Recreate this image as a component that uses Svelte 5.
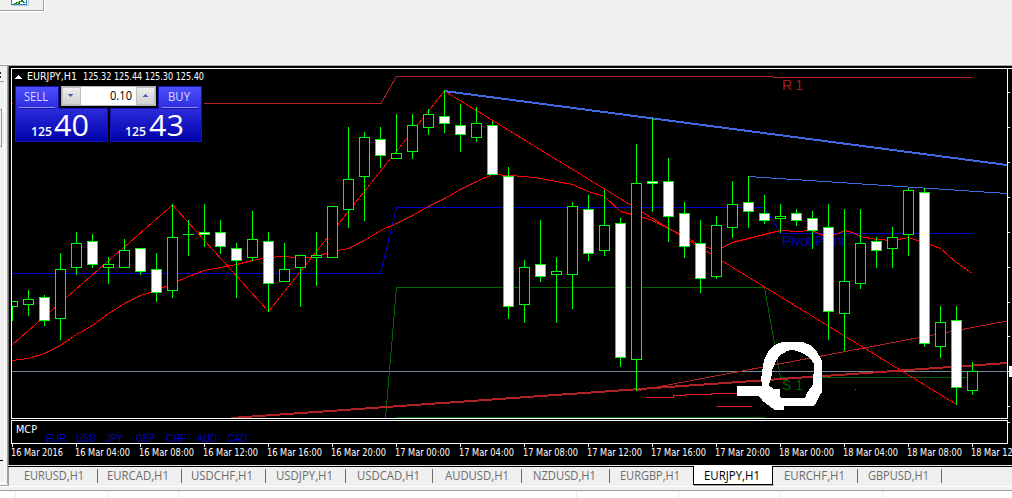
<script>
  // [high, bodyTop, bodyBottom, low, bearish]
  const bars = [
    [301,301,307,321,0],[290,299,305,316,0],[295,297,321,326,1],[253,269,319,340,0],[232,243,268,275,0],
    [234,241,265,268,1],[257,264,268,284,0],[239,250,268,268,0],[248,248,272,275,1],[253,269,293,302,1],
    [204,237,291,298,0],[220,234,235,256,0],[204,232,235,247,1],[220,232,247,254,1],[243,248,261,298,1],
    [211,239,258,261,0],[232,241,284,312,1],[243,269,282,282,0],[255,255,268,307,0],[232,255,258,286,0],
    [206,206,258,258,0],[127,179,210,228,0],[132,137,177,221,0],[127,139,156,168,1],[114,153,159,159,0],
    [114,125,152,159,0],[109,114,128,135,0],[90,116,124,133,1],[104,125,135,152,1],[107,123,138,142,0],
    [121,125,175,175,1],[167,176,307,319,1],[260,267,305,323,0],[220,264,277,282,1],[257,271,275,323,0],
    [202,206,275,309,0],[195,209,254,261,1],[190,225,251,256,0],[218,223,358,367,1],[144,183,360,391,0],
    [118,181,184,212,1],[158,181,217,242,1],[202,213,247,258,1],[220,243,279,293,1],[216,225,277,279,0],
    [181,204,228,238,0],[176,202,212,228,1],[195,213,221,224,1],[204,216,219,233,0],[209,213,221,226,1],
    [211,218,231,249,1],[204,227,312,340,1],[209,281,314,351,0],[209,243,284,289,0],[237,241,251,268,1],
    [227,237,249,268,0],[188,190,235,256,0],[188,192,344,347,1],[306,322,347,358,0],[306,320,388,405,1],
    [362,371,391,395,0]
  ];
  const candles = bars.map(([hi, top, bot, lo, full], i) => ({ x: 12 + 16 * i, hi, top, bot, lo, full }));

  const average = '12,360 28,358 44,353 60,345 76,334 92,325 108,313 124,303 140,295 156,290 172,283 188,276 204,270 220,267 236,264 252,260 268,257 284,256 300,258 316,256 332,251 348,248 364,240 380,230 396,223 412,215 428,206 444,198 460,189 476,181 492,174 508,175 524,176 540,178 556,181 572,184 588,191 604,196 620,211 636,215 652,220 668,228 684,236 700,245 710,248 722,247 732,242 748,238 764,234 780,230 796,231 812,230 820,234 828,236 838,233 844,230 852,232 860,236 876,239 892,240 908,237 920,241 932,245 940,248 956,262 972,273';

  const times = ['16 Mar 2016', ...[1,2,3,4,5,6,7,8,9,10,11,12,13,14,15].map((n) => {
    const h = n * 4;
    return `${16 + Math.floor(h / 24)} Mar ${String(h % 24).padStart(2, '0')}:00`;
  })];
  const currencies = [['EUR',46,20],['USD',76,20],['JPY',106,17],['GBP',136,19],['CHF',166,20],['AUD',197,20],['CAD',227,20]];
  const scale = [92,127,162,197,232,267,302,336,371,406,422];
  const tabs = [
    ['EURUSD,H1',24,60,97],['EURCAD,H1',107,62,181],['USDCHF,H1',191,62,265],['USDJPY,H1',276,57,345],
    ['USDCAD,H1',357,63,432],['AUDUSD,H1',445,64,521],['NZDUSD,H1',533,63,609],['EURGBP,H1',620,60,0],
    ['EURJPY,H1',704,56,0],['EURCHF,H1',784,61,857],['GBPUSD,H1',868,61,941]
  ];
  const columns = [15,107,178,576,678,780,882];
</script>

<div class="window">
  <header class="toolbar">
    <svg width="1012" height="66" shape-rendering="crispEdges">
      <path d="M43.5 0V10.5H0" fill="none" stroke="#a0a0a0" />
      <path d="M44.5 0V11.5H0" fill="none" stroke="#fff" />
      <rect x="11" y="0" width="16" height="5" fill="#2f7fc4" />
      <rect x="12" y="0" width="14" height="4" fill="#fff" />
      <path d="M14 3.5h2v-1h2v1h1v-2h2v-1h1v1h1v1h2" fill="none" stroke="#138a13" />
      <path d="M12 5.5h16V0" fill="none" stroke="#c0ccd8" />
    </svg>
  </header>

  <main class="workspace">
    <aside class="side">
      <svg width="9" height="420" shape-rendering="crispEdges">
        <path d="M0 6.5h1M0 10.5h1" stroke="#222" stroke-width="2" />
        <path d="M0 15.5h4.5V420" fill="none" stroke="#fff" />
        <path d="M0 15.5h4" stroke="#a0a0a0" />
        <path d="M0 43.5h1.5v37H0" fill="none" stroke="#999" />
        <path d="M0 394.5h3" stroke="#000" />
        <path d="M7.5 0V420" stroke="#a0a0a0" />
        <path d="M8.5 0V420" stroke="#696969" />
      </svg>
    </aside>
    <svg class="chart" width="1003" height="399" viewBox="9 66 1003 399" shape-rendering="crispEdges">
      <defs>
        <linearGradient id="quote" x1="0" y1="86" x2="0" y2="142" gradientUnits="userSpaceOnUse">
          <stop offset="0" stop-color="#5050ff" />
          <stop offset=".45" stop-color="#2828d8" />
          <stop offset="1" stop-color="#0000a8" />
        </linearGradient>
        <linearGradient id="spin" x1="0" y1="0" x2="0" y2="1">
          <stop offset="0" stop-color="#f0f0f0" />
          <stop offset=".5" stop-color="#dedede" />
          <stop offset="1" stop-color="#d0d0d0" />
        </linearGradient>
        <clipPath id="plot"><rect x="12" y="69" width="995" height="349" /></clipPath>
      </defs>
      <rect x="9" y="66" width="1003" height="399" fill="#000" />

      <g clip-path="url(#plot)" fill="none">
        <path d="M12 371.5H1007" stroke="#778899" />
        <path d="M12 103.5H381L396.5 76.5H773M773 77.5H972" stroke="#b22222" />
        <path d="M12 273.5H380.5L396.5 207.5H764.5L780.5 233.5H972" stroke="#0000cd" />
        <path d="M385.5 418L396.5 287.5H764.5L780.5 377.5H972M396 417.5H765" stroke="#006400" />
        <g class="label" font-size="14">
          <text x="782" y="90" fill="#a01e1e" textLength="21">R 1</text>
          <text x="782" y="246" fill="#0000b4" textLength="63">Pivot Point</text>
          <text x="782" y="390" fill="#006400" textLength="21">S 1</text>
        </g>
        <path d="M444 91L1007 165" stroke="#4169e1" stroke-width="2" />
        <path d="M748 176.5L1007 193.5" stroke="#4169e1" />
        <path d="M231 418L1007 363" stroke="#b22222" stroke-width="2" />
        <path d="M636 391L1007 321" stroke="#b22222" />
        <path d="M12.5 344.5L172.5 205L268.5 311.5L444.5 91L956.5 404.5" stroke="#f00" />
        <polyline points={average} stroke="#f00" transform="translate(.5 .5)" />
        <path d="M646 397.5h27.5v-2h12v-1H711v-1h26M717 406.5h35M855 389.5h1" stroke="#ed1c24" />
        {#each candles as c}
          <rect x={c.x} y={c.hi} width="1" height={c.lo - c.hi} fill="#0f0" />
          <rect x={c.x - 5} y={c.top} width="11" height={c.bot - c.top} fill="#0f0" />
          {#if c.bot - c.top > 2}
            <rect x={c.x - 4} y={c.top + 1} width="9" height={c.bot - c.top - 2} fill={c.full ? '#fff' : '#000'} />
          {/if}
        {/each}
      </g>

      <path transform="translate(600 280) scale(.33333)" fill="#fff" fill-rule="evenodd"
        d="M411 318H485L484 290L492 240L505 215L525 195L545 186H608L630 195L650 215L665 240L666 335L645 375L640 378H552V390H525L490 365L476 348H411ZM508 317L520 327H540V352L550 354H615L620 340L638 315L640 292L642 250L625 230L605 218L590 213L577 209L560 214L540 225L530 240L516 270L514 295L508 310Z" />

      <path d="M1012 68.5H11.5V418.5H1007.5V69M1007.5 420.5H11.5V443.5H1007.5Z" fill="none" stroke="#fff" />
      {#each scale as y}
        <rect x="1008" {y} width="2" height="1" fill="#fff" />
      {/each}
      <rect x="1009" y="366" width="3" height="11" fill="#fff" />

      <path d="M15 79L18.5 75L22 79Z" fill="#fff" />
      <g class="small" fill="#fff" font-size="10.5">
        <text x="27" y="80" textLength="50" lengthAdjust="spacingAndGlyphs">EURJPY,H1</text>
        <text x="83" y="80" textLength="121" lengthAdjust="spacingAndGlyphs">125.32 125.44 125.30 125.40</text>
        <text x="16" y="433" textLength="21" lengthAdjust="spacingAndGlyphs">MCP</text>
        {#each times as t, i}
          <rect x={12 + i * 64} y="444" width="1" height="3" />
          <text x={11 + i * 64} y="456" textLength={i ? 55 : 52} lengthAdjust="spacingAndGlyphs">{t}</text>
        {/each}
      </g>
      <g class="label" font-size="11" fill="#0000cd">
        {#each currencies as [name, x, w]}
          <text {x} y="442" textLength={w} lengthAdjust="spacingAndGlyphs">{name}</text>
        {/each}
      </g>

      <rect x="13" y="84" width="191" height="60" fill="#000" />
      <path d="M15.5 86.5H58.5V108.5H107.5V141.5H15.5ZM201.5 86.5H158.5V108.5H110.5V141.5H201.5Z" fill="url(#quote)" stroke="#1414b4" />
      <path d="M19 107.5H55M162 107.5H198" stroke="#8c8cff" />
      <path d="M19 108.5H55M162 108.5H198" stroke="#1414a0" />
      <rect x="61.5" y="86.5" width="94" height="19" fill="#fff" stroke="#b4b4b4" />
      <rect x="62.5" y="87.5" width="18" height="17" fill="url(#spin)" stroke="#c0c0c0" />
      <rect x="136.5" y="87.5" width="18" height="17" fill="url(#spin)" stroke="#c0c0c0" />
      <path d="M68 94h5l-2.500 3ZM143 97h5l-2.500 -3Z" fill="#4a62b8" />
      <g class="ui" font-size="12.5" fill="#d8d8ff">
        <text x="24" y="101" textLength="24" lengthAdjust="spacingAndGlyphs">SELL</text>
        <text x="168" y="101" textLength="22" lengthAdjust="spacingAndGlyphs">BUY</text>
        <text x="110" y="100" fill="#000" textLength="22" lengthAdjust="spacingAndGlyphs" font-size="12">0.10</text>
        <g fill="#fff">
          <text x="31" y="136" font-weight="600" textLength="21" lengthAdjust="spacingAndGlyphs">125</text>
          <text x="125" y="136" font-weight="600" textLength="21" lengthAdjust="spacingAndGlyphs">125</text>
          <text x="54" y="136" font-size="30" textLength="35" lengthAdjust="spacingAndGlyphs">40</text>
          <text x="149" y="136" font-size="30" textLength="35" lengthAdjust="spacingAndGlyphs">43</text>
        </g>
      </g>
    </svg>
  </main>

  <footer>
    <svg width="1012" height="33" viewBox="0 465 1012 33" shape-rendering="crispEdges">
      <rect x="0" y="465" width="1012" height="33" fill="#f0f0f0" />
      <path d="M9 465.500H1012" stroke="#e3e3e3" />
      <path d="M8 466.500H1012" stroke="#000" />
      <path d="M4.500 465V483.500H0" fill="none" stroke="#fff" />
      <path d="M8.500 467V485.500H0M7.500 465V484" fill="none" stroke="#a0a0a0" />
      <path d="M0 486.500H1012" stroke="#fff" />
      <rect x="0" y="491" width="1012" height="7" fill="#fff" />
      <path d="M0 490.500H1012" stroke="#a0a0a0" />
      {#each columns as x}
        <rect {x} y="491" width="1" height="7" fill="#ececec" />
      {/each}
      <path d="M694 485.500H773.500" stroke="#a0a0a0" />
      <rect x="693" y="466" width="80" height="19" fill="#000" />
      <rect x="694" y="465" width="78" height="19" fill="#fff" />
      <g class="ui" font-size="12.5">
        {#each tabs as [name, x, w, sep]}
          <text {x} y="480" textLength={w} lengthAdjust="spacingAndGlyphs" fill={name === 'EURJPY,H1' ? '#000' : '#6d6d6d'}>{name}</text>
          {#if sep}<rect x={sep} y="469" width="1" height="14" fill="#6d6d6d" />{/if}
        {/each}
      </g>
    </svg>
  </footer>
</div>

<style>
  .window {
    width: 1012px;
    height: 498px;
    overflow: hidden;
    display: flex;
    flex-direction: column;
    background: #f0f0f0;
  }
  svg { display: block; }
  .toolbar {
    height: 66px;
    box-sizing: border-box;
    background: linear-gradient(#f0f0f0 64px, #fafafa 64px, #fafafa 65px, #a0a0a0 65px);
  }
  .workspace { display: flex; height: 399px; overflow: hidden; }
  .side { width: 9px; overflow: hidden; }
  .label { font-family: "Liberation Sans", Arial, sans-serif; }
  .small { font-family: "DejaVu Sans Condensed", "DejaVu Sans", Tahoma, sans-serif; }
  .ui { font-family: "Open Sans", "Noto Sans", sans-serif; }
</style>
